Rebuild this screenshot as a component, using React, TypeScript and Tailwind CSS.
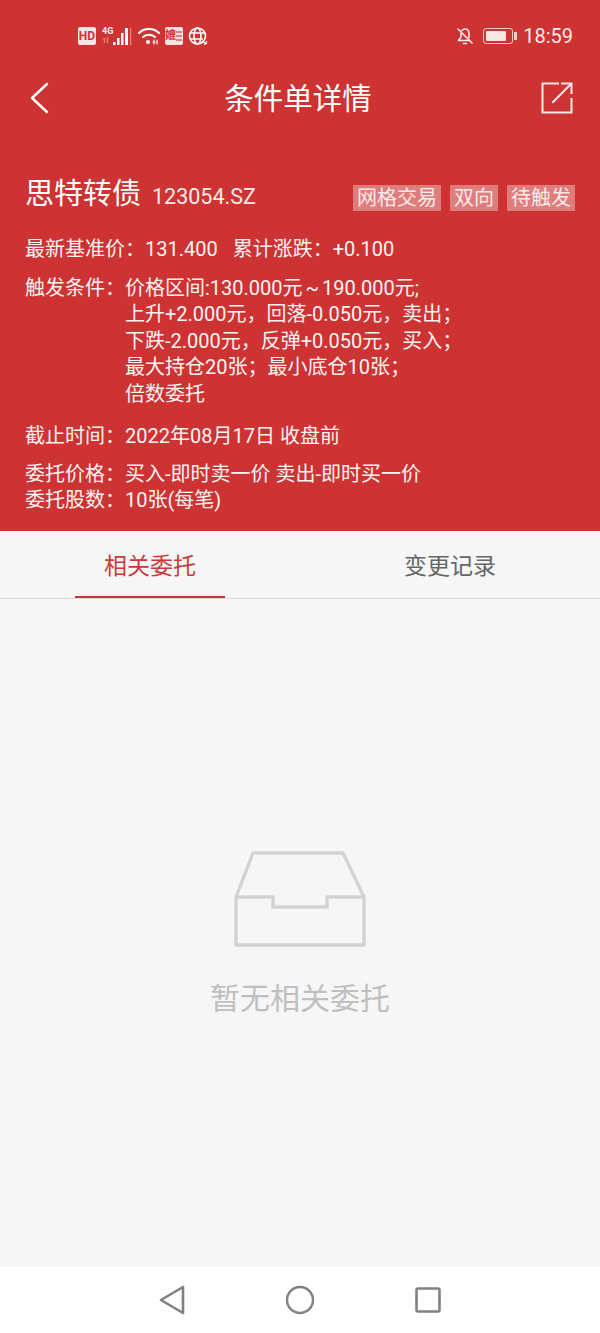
const cjk = "font-['Roboto','Noto_Sans_CJK_SC',sans-serif]";

const tags = ['网格交易', '双向', '待触发'];

const conditions = [
  '上升+2.000元，回落-0.050元，卖出；',
  '下跌-2.000元，反弹+0.050元，买入；',
  '最大持仓20张；最小底仓10张；',
  '倍数委托',
];

function StatusBar() {
  return (
    <div className="h-[72px] flex items-center justify-between pl-[78px] pr-[27px] text-white">
      <div className="flex items-center">
        <div className="w-[18px] h-[18px] bg-[#f8e4e4] rounded-[2px] text-[#cd3333] text-[12px] font-bold leading-[18px] text-center">HD</div>
        <svg width="32" height="20" viewBox="0 0 32 20" className="ml-[6px]">
          <text x="0" y="8" fontSize="9" fontWeight="700" fill="#fff" fontFamily="Roboto">4G</text>
          <text x="0" y="17" fontSize="8" fontWeight="700" fill="#e88" fontFamily="Roboto">1l</text>
          <rect x="11" y="16" width="2.5" height="3" fill="#fff" />
          <rect x="15" y="12" width="2.5" height="7" fill="#fff" />
          <rect x="19" y="7" width="2.5" height="12" fill="#fff" />
          <rect x="23" y="2" width="3" height="17" fill="#fff" />
          <rect x="28" y="2" width="1.2" height="17" fill="#e88" />
        </svg>
        <svg width="24" height="18" viewBox="0 0 24 18" fill="none" stroke="#fff" strokeWidth="2" strokeLinecap="round" className="ml-[3px]">
          <path d="M2 6 C7 0.5 17 0.5 22 6" />
          <path d="M6 10 C9 7 15 7 18 10" />
          <circle cx="11" cy="15" r="2" fill="#fff" stroke="none" />
          <path d="M16 15h2M20 13v4M17 13v4" strokeWidth="1.2" />
        </svg>
        <div className="ml-[4px] w-[18px] h-[18px] bg-[#f8e4e4] rounded-[2px] flex items-center overflow-hidden">
          <span className="text-[#cd3333] text-[11px] font-bold leading-[18px]">媲</span>
          <svg width="6" height="12" viewBox="0 0 6 12" fill="#d98080">
            <rect x="0" y="1" width="6" height="2" />
            <rect x="0" y="5" width="6" height="2" />
            <rect x="0" y="9" width="6" height="2" />
          </svg>
        </div>
        <svg width="20" height="20" viewBox="0 0 20 20" fill="none" stroke="#fff" strokeWidth="1.6" className="ml-[5px]">
          <circle cx="9.5" cy="10" r="8" />
          <ellipse cx="9.5" cy="10" rx="3.5" ry="8" />
          <path d="M2 7h15M2 13h13" />
          <path d="M14 15l5 3M16 19l3-4" strokeWidth="1.2" />
        </svg>
      </div>
      <div className="flex items-center">
        <svg width="18" height="18" viewBox="0 0 18 18" fill="none" stroke="#fbeaea" strokeWidth="1.6" strokeLinecap="round" strokeLinejoin="round">
          <path d="M2 2 L16 16" />
          <path d="M6 3.5 C7 2.5 8 2 9 2 C11.5 2 13 4 13 7 L13 10.5" />
          <path d="M5 6.5 L5 10 L2.5 13.5 L13.5 13.5" />
          <path d="M7.5 16.5 L10.5 16.5" />
        </svg>
        <div className="ml-[9px] w-[30px] h-[16px] border border-[#f3c9c9] rounded-[3px] p-[2px]">
          <div className="h-full w-[20px] bg-[#f8e4e4] rounded-[1px]" />
        </div>
        <div className="ml-[1px] w-[3px] h-[8px] bg-[#f3c9c9]" />
        <span className="ml-[6px] text-[20px] leading-none text-[#fbeaea]">18:59</span>
      </div>
    </div>
  );
}

function NavBar() {
  return (
    <div className="h-[52px] relative flex items-center justify-between pl-[29px] pr-[27px]">
      <svg width="20" height="32" viewBox="0 0 20 32" fill="none" stroke="#fff" strokeWidth="2.4" strokeLinecap="round" strokeLinejoin="round">
        <path d="M18 2 L3 16 L18 30" />
      </svg>
      <span className="absolute inset-x-0 top-[9px] pr-[4px] text-center text-white text-[29.5px] leading-[36px]">条件单详情</span>
      <svg width="32" height="32" viewBox="0 0 32 32" fill="none" stroke="#fbeaea" strokeWidth="2" strokeLinecap="square">
        <path d="M17 1.5 L1.5 1.5 L1.5 30.5 L30.5 30.5 L30.5 17" />
        <path d="M21 1.5 L30.5 1.5 L30.5 11" />
        <path d="M29.5 2.5 L12 20" />
      </svg>
    </div>
  );
}

function Header() {
  return (
    <div className="h-[531px] bg-[#cd3333] text-white">
      <StatusBar />
      <NavBar />
      <div className="pl-[25px] pr-[25px] pt-[54px]">
        <div className="h-[34px] flex items-center justify-between">
          <div className="flex items-baseline">
            <span className="text-[29px] leading-[34px]">思特转债</span>
            <span className="ml-[11px] text-[21.5px] leading-[34px] text-[#fbeaea]">123054.SZ</span>
          </div>
          <div className="flex gap-[9px] mt-[5px]">
            {tags.map((tag) => (
              <span key={tag} className="h-[26px] px-[4px] bg-[#df7d7d] text-[20px] leading-[26px] text-[#fbeaea]">{tag}</span>
            ))}
          </div>
        </div>
        <div className="mt-[24px] text-[20px] leading-[26.5px] text-[#fdf3f3]">
          <div className="flex">
            <span>最新基准价：131.400</span>
            <span className="ml-[15px]">累计涨跌：+0.100</span>
          </div>
          <div className="mt-[12px] flex">
            <span className="w-[100px] shrink-0">触发条件：</span>
            <div>
              <div className="[word-spacing:-2px]">价格区间:130.000元 ~ 190.000元;</div>
              {conditions.map((line) => (
                <div key={line}>{line}</div>
              ))}
            </div>
          </div>
          <div className="mt-[16px] flex">
            <span className="w-[100px] shrink-0">截止时间：</span>
            <span>2022年08月17日 收盘前</span>
          </div>
          <div className="mt-[11px] flex">
            <span className="w-[100px] shrink-0">委托价格：</span>
            <span>买入-即时卖一价 卖出-即时买一价</span>
          </div>
          <div className="flex">
            <span className="w-[100px] shrink-0">委托股数：</span>
            <span>10张(每笔)</span>
          </div>
        </div>
      </div>
    </div>
  );
}

function Tabs() {
  return (
    <div className="h-[68px] flex border-b border-[#dcdcdc] text-[23px]">
      <div className="flex-1 flex justify-center">
        <div className="w-[150px] h-[67px] border-b-2 border-[#cd3333] text-[#c93a3a] text-center leading-[72px]">相关委托</div>
      </div>
      <div className="flex-1 flex justify-center">
        <div className="w-[150px] text-[#666666] text-center leading-[72px]">变更记录</div>
      </div>
    </div>
  );
}

function EmptyState() {
  return (
    <div className="h-[668px] flex flex-col items-center pt-[252px]">
      <svg width="132" height="98" viewBox="0 0 132 98" fill="none" stroke="#d2d2d2" strokeWidth="3.4" strokeLinejoin="round">
        <path d="M2 46 L19 2 L109 2 L130 46" />
        <path d="M2 46 L39 46 L39 56 L93 56 L93 46 L130 46 L130 94 L2 94 Z" />
      </svg>
      <div className="mt-[30px] text-[30px] leading-[40px] text-[#bfbfbf]">暂无相关委托</div>
    </div>
  );
}

function BottomNav() {
  return (
    <div className="h-[66px] bg-white flex items-center justify-center">
      <div className="flex items-center gap-[100px]">
        <svg width="26" height="30" viewBox="0 0 26 30" fill="none" stroke="#808080" strokeWidth="2.6" strokeLinejoin="round">
          <path d="M24 2 L2 15 L24 28 Z" />
        </svg>
        <svg width="30" height="30" viewBox="0 0 30 30" fill="none" stroke="#808080" strokeWidth="2.4">
          <circle cx="15" cy="15" r="13" />
        </svg>
        <svg width="26" height="26" viewBox="0 0 26 26" fill="none" stroke="#808080" strokeWidth="2.6" strokeLinejoin="round">
          <rect x="1.5" y="1.5" width="23" height="23" rx="1.5" />
        </svg>
      </div>
    </div>
  );
}

export default function App() {
  return (
    <div className={`w-[600px] h-[1333px] overflow-hidden bg-[#f6f6f6] ${cjk}`}>
      <Header />
      <Tabs />
      <EmptyState />
      <BottomNav />
    </div>
  );
}
